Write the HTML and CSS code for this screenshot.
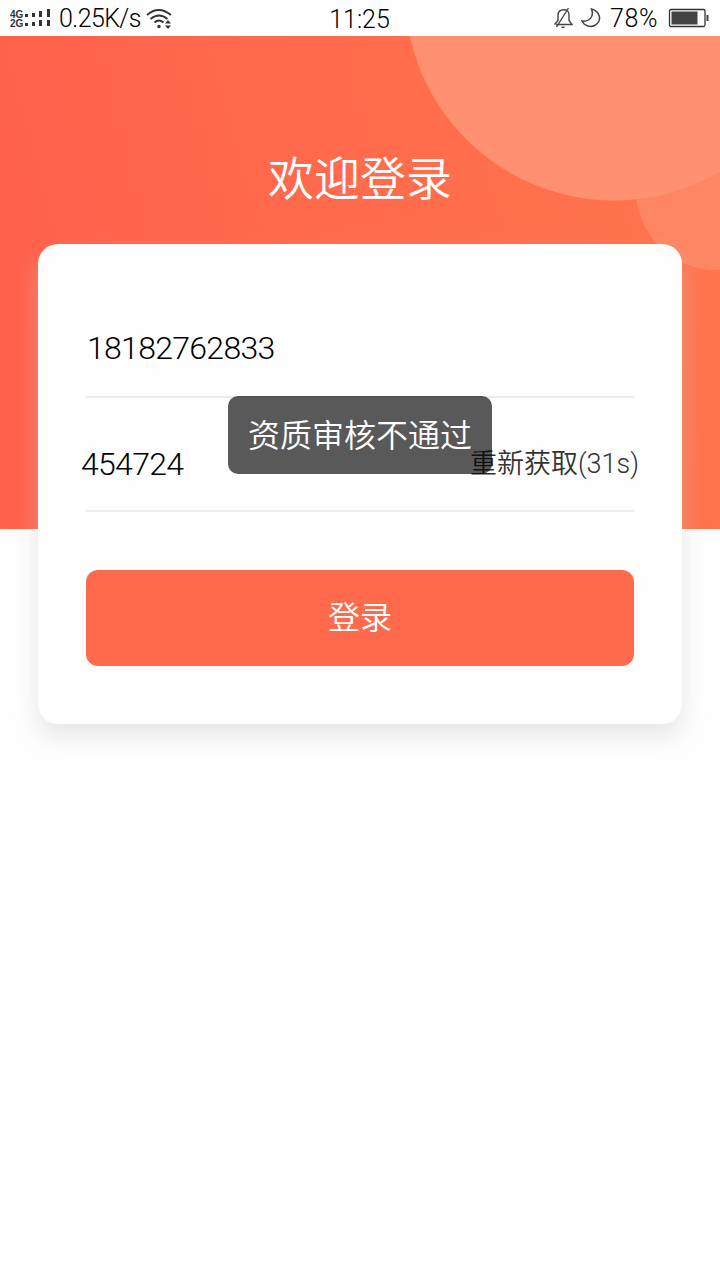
FILE: index.html
```html
<!DOCTYPE html>
<html lang="zh-CN">
<head>
<meta charset="utf-8">
<title>欢迎登录</title>
<link rel="stylesheet" href="styles.css">
</head>
<body>
<header class="status">
  <div class="network">
    <div class="modes"><span>4G</span><span>2G</span></div>
    <svg class="signal" width="27" height="20" viewBox="0 0 27 20" fill="#333">
      <path d="M0 5h3v3H0zM7 4h3v4H7zM14 2h3v6h-3zM22 0h3v8h-3zM0 14h3v3H0zM7 13h3v4H7zM14 11h3v6h-3zM22 11h3v6h-3z"/>
    </svg>
    <span class="speed">0.25K/s</span>
    <svg class="wifi" width="27" height="22" viewBox="0 0 27 22" fill="none" stroke="#333" stroke-width="1.8">
      <path d="M1 7Q12.500-3 25 7M4.500 11Q13 4 21.500 11M8.500 14.500Q13 10.500 17.500 14.500"/>
      <circle cx="13" cy="18.500" r="1.700" fill="#333" stroke="none"/>
      <path d="M19 15.500L22 12L25 15.500zM19 17.500L22 21L25 17.500z" fill="#333" stroke="none"/>
    </svg>
  </div>
  <time class="clock">11:25</time>
  <div class="power">
    <svg class="bell" width="20" height="22" viewBox="0 0 20 22" fill="none" stroke="#444" stroke-width="1.400">
      <path d="M3 17.500H19L16 13.500V8.500C16 4.500 14.500 2.800 11 2.800S5 4.500 5 8.500V13.500L1.500 17.500M3.500 20L15.500 1M8.500 20.300h3"/>
    </svg>
    <svg class="moon" width="20" height="20" viewBox="0 0 20 20" fill="none" stroke="#444" stroke-width="1.500">
      <path d="M10.500 1C19.500 3.500 21 12.500 14.500 17C9.500 20 3.500 18 1 13C8 14 13.500 9 10.500 1Z"/>
    </svg>
    <span class="percent">78%</span>
    <svg class="battery" width="41" height="20" viewBox="0 0 41 20">
      <rect x="1.500" y="1.500" width="35.500" height="17" rx="1.500" fill="none" stroke="#333" stroke-width="1.300"/>
      <path d="M3.500 3.500h26v13h-26zM38.500 7h2v6h-2z" fill="#444"/>
    </svg>
  </div>
</header>
<main class="page">
  <div class="hero">
    <svg class="circles" width="720" height="493" viewBox="0 36 720 493">
      <circle cx="716" cy="190" r="80" fill="#ff8662"/>
      <circle cx="614" cy="-8.500" r="209" fill="#ff9171"/>
    </svg>
  </div>
  <h1 class="title">欢迎登录</h1>
  <form class="card">
    <div class="field phone">18182762833</div>
    <div class="field code"><span class="digits">454724</span><span class="resend">重新获取<span class="count">(31s)</span></span></div>
    <button class="submit" type="button">登录</button>
  </form>
  <div class="toast">资质审核不通过</div>
</main>
</body>
</html>
```
FILE: styles.css
```css
* { box-sizing: border-box; }

body {
  margin: 0;
  width: 720px;
  height: 1280px;
  overflow: hidden;
  background: #fefefe;
  color: #000;
  font-family: "Noto Sans CJK SC", sans-serif;
  font-weight: 350;
}

.status {
  display: grid;
  grid-template-columns: 1fr auto 1fr;
  align-items: center;
  height: 36px;
  padding: 0 11px 0 10px;
  background: #fefefe;
}

.network, .power { display: flex; align-items: center; }
.power { justify-content: flex-end; }

.modes {
  display: flex;
  flex-direction: column;
  width: 15px;
  color: #333;
  font: 700 10px/9px "Liberation Sans", sans-serif;
}

.speed, .clock, .percent {
  font: 350 25px/36px Roboto, sans-serif;
  white-space: nowrap;
}

.signal { flex: none; }
.speed { margin-left: 7px; width: 83px; letter-spacing: -0.6px; }
.wifi { margin-left: 4px; }
.clock { padding-top: 2px; letter-spacing: 0; }
.bell, .moon, .battery { margin-bottom: 2px; }
.moon { margin-left: 8px; }
.percent { margin-left: 9px; letter-spacing: 0.6px; }
.battery { margin-left: 10px; }

.page { position: relative; padding-top: 108px; }

.hero {
  position: absolute;
  inset: 0 0 auto;
  height: 493px;
  background: linear-gradient(75deg, #ff614b 10%, #ff744d 90%);
}

.circles { display: block; }

.title {
  position: relative;
  margin: 0;
  height: 100px;
  color: #fff;
  font-size: 46px;
  font-weight: 350;
  line-height: 63px;
  text-align: center;
}

.card {
  position: relative;
  height: 480px;
  margin: 0 38px;
  padding: 54px 48px 0;
  border-radius: 20px;
  background: #fefefe;
  box-shadow: 0 13px 24px rgba(200, 200, 200, 0.42);
}

.field { border-bottom: 2px solid #ededed; }

.phone, .digits {
  font: 300 32px/100px Roboto, sans-serif;
  letter-spacing: -0.7px;
}

.phone { height: 100px; padding-left: 1px; }

.code {
  display: flex;
  justify-content: space-between;
  align-items: center;
  height: 114px;
  margin-right: -5px;
  margin-left: -5px;
  padding-top: 17px;
  border: 0;
  background: linear-gradient(#ededed, #ededed) 5px 100% / 548px 2px no-repeat;
}

.resend {
  color: #333;
  font-size: 27px;
  line-height: 40px;
  padding-bottom: 1px;
}

.count { font-family: Roboto, sans-serif; font-weight: 300; }

.submit {
  display: block;
  width: 100%;
  height: 96px;
  margin-top: 58px;
  padding: 0 0 7px;
  border: 0;
  border-radius: 12px;
  background: #ff694c;
  color: #fff;
  font: 350 32px "Noto Sans CJK SC", sans-serif;
}

.toast {
  position: absolute;
  top: 360px;
  left: 228px;
  width: 264px;
  height: 78px;
  border-radius: 10px;
  background: rgba(0, 0, 0, 0.65);
  color: #fff;
  font-size: 32px;
  line-height: 75px;
  text-align: center;
}
```
